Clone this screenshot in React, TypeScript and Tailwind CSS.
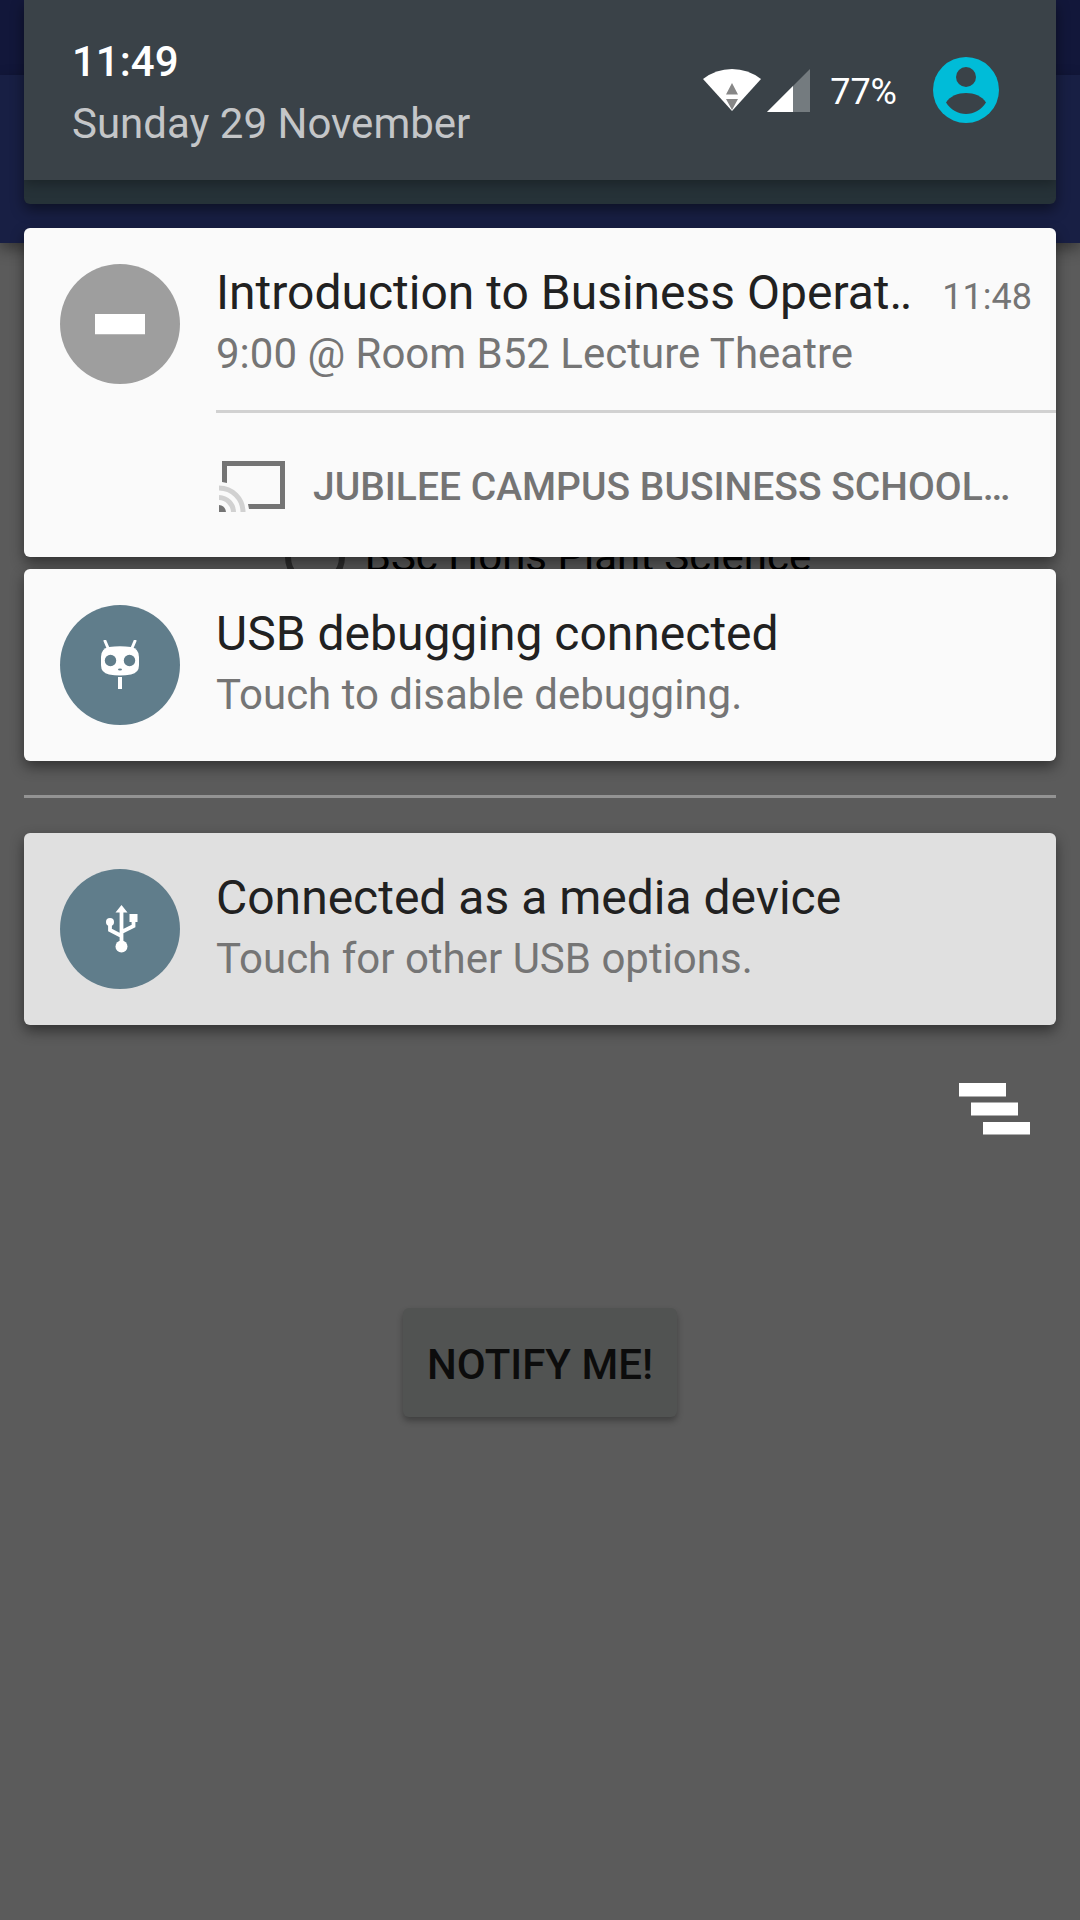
import { useState } from "react";

const cardShadow = "shadow-[0_6px_14px_rgba(0,0,0,0.45)]";

function WifiIcon() {
    return (
        <svg width="58" height="42" viewBox="0 0 58 42" aria-hidden="true">
            <path d="M29 42 0 10Q13 0 29 0T58 10Z" fill="#fff" />
            <path d="M29 14 35 25.500H23ZM23 30H35L29 41Z" fill="#878787" />
        </svg>
    );
}

function SignalIcon() {
    return (
        <svg width="43" height="43" viewBox="0 0 43 43" aria-hidden="true">
            <path d="M43 0V43H0Z" fill="#747b7f" />
            <path d="M26 17V43H0Z" fill="#fff" />
        </svg>
    );
}

function UserIcon() {
    return (
        <svg width="66" height="66" viewBox="0 0 66 66" aria-hidden="true">
            <circle cx="33" cy="33" r="33" fill="#00bcd8" />
            <circle cx="33" cy="20" r="10" fill="#3a4248" />
            <path d="M13 45.500C17 39 25 36 33 36S49 39 53 45.500C48 53 41 57 33 57S18 53 13 45.500Z" fill="#3a4248" />
        </svg>
    );
}

function CastIcon() {
    return (
        <svg width="66" height="52" viewBox="0 0 66 52" aria-hidden="true">
            <path d="M3 21V0H66V48H30L29 43H61V5H8V22Z" fill="#747474" />
            <path d="M0 44A8 8 0 0 1 7 51H0Z" fill="#747474" />
            <path d="M0 36.500A15 15 0 0 1 14.500 51M0 27A24 24 0 0 1 24 51" fill="none" stroke="#d1d1d1" strokeWidth="5" />
        </svg>
    );
}

function CidIcon() {
    return (
        <svg width="38" height="50" viewBox="0 0 38 50" aria-hidden="true">
            <path d="M4 1 7 8M34 1 31 8" stroke="#fff" strokeWidth="3" strokeLinecap="round" />
            <path d="M8 7Q19 5.500 30 7Q38 8.500 38 17V25Q38 33 30 34.500Q19 36.500 8 34.500Q0 33 0 25V17Q0 8.500 8 7Z" fill="#fff" />
            <circle cx="9.500" cy="20.500" r="5.700" fill="#607d8b" />
            <circle cx="28.500" cy="20.500" r="5.700" fill="#607d8b" />
            <ellipse cx="19" cy="29.500" rx="2" ry="1" fill="#607d8b" />
            <path d="M17 37H21V49H17Z" fill="#fff" />
        </svg>
    );
}

function UsbIcon() {
    return (
        <svg width="35" height="48" viewBox="-3 0 35 48" aria-hidden="true">
            <path d="M15.500 0 21.500 7.500H9.500ZM23.500 9H31.500V17H23.500Z" fill="#fff" />
            <circle cx="4" cy="17" r="4" fill="#fff" />
            <circle cx="15.500" cy="41.500" r="6" fill="#fff" />
            <path d="M15.500 5V40M4 17V25L15.500 31M27.500 14V21L15.500 27" fill="none" stroke="#fff" strokeWidth="3.800" />
        </svg>
    );
}

function DndIcon() {
    return (
        <svg width="50" height="21" viewBox="0 0 50 21" aria-hidden="true">
            <path d="M0 0H50V20.300H0Z" fill="#fff" />
        </svg>
    );
}

function ClearAllIcon() {
    return (
        <svg width="71" height="52" viewBox="0 0 71 52" aria-hidden="true">
            <path d="M0 0H47V13.500H0ZM12 19.500H59V32.500H12ZM24 39H71V51.500H24Z" fill="#fff" />
        </svg>
    );
}

function Notification({
    icon,
    iconColor,
    background,
    title,
    text,
    time,
    children,
}: Readonly<{
    icon: React.ReactNode;
    iconColor: string;
    background: string;
    title: string;
    text: string;
    time?: string;
    children?: React.ReactNode;
}>) {
    return (
        <li className={`${background} ${cardShadow} rounded-md flex`}>
            <div className="w-48 h-48 shrink-0 flex items-center justify-center">
                <div className={`${iconColor} w-30 h-30 rounded-full flex items-center justify-center`}>{icon}</div>
            </div>
            <div className="flex-1 min-w-0">
                <div className="pt-[35px] pr-6">
                    <div className="flex items-baseline justify-between gap-6">
                        <h2 className="text-[48px] leading-[60px] text-[#212121] whitespace-nowrap">{title}</h2>
                        {time && <time className="text-[36px] leading-[42px] text-[#757575]">{time}</time>}
                    </div>
                    <p className="text-[42px] leading-[62px] text-[#757575]">{text}</p>
                </div>
                {children}
            </div>
        </li>
    );
}

function App() {
    const [programme, setProgramme] = useState(true);

    return (
        <div className="relative min-h-screen bg-[#5b5b5b] font-[Roboto,sans-serif] overflow-hidden">
            {/* app under the shade */}
            <div className="absolute inset-0 flex flex-col items-center">
                <div className="w-full h-[75px] bg-[#12173a]" />
                <div className="w-full h-[168px] bg-[#181f44] shadow-[0_6px_14px_rgba(0,0,0,0.4)]" />
                <label className="mt-[284px] pl-4 flex items-center gap-5 text-[42px] leading-[60px] text-black">
                    <input
                        type="radio"
                        checked={!programme}
                        onChange={() => setProgramme(!programme)}
                        className="appearance-none w-[60px] h-[60px] rounded-full border-[6px] border-[#2d2d2d]"
                    />
                    BSc Hons Plant Science
                </label>
                <button className="mt-[721px] h-[109px] px-6 pt-1 rounded-md bg-[#515352] text-[42px] font-medium text-[#0c0c0c] shadow-[0_4px_6px_rgba(0,0,0,0.3)]">
                    NOTIFY ME!
                </button>
            </div>

            {/* notification shade */}
            <div className="relative px-6">
                <header className={`bg-[#263238] ${cardShadow} rounded-b-md pb-6 overflow-hidden`}>
                    <div className="h-[180px] bg-[#3a4248] shadow-[0_4px_12px_rgba(0,0,0,0.3)] px-12 flex items-center justify-between">
                        <div className="pt-1.5 text-[42px] leading-[62px]">
                            <div className="font-medium text-white">11:49</div>
                            <div className="text-[#c4c6c8]">Sunday 29 November</div>
                        </div>
                        <div className="flex items-center pr-[9px]">
                            <div className="flex gap-1.5">
                                <WifiIcon />
                                <SignalIcon />
                            </div>
                            <span className="ml-5 mr-9 pt-1 text-[36px] leading-[42px] text-white">77%</span>
                            <button aria-label="User">
                                <UserIcon />
                            </button>
                        </div>
                    </div>
                </header>

                <ul className="mt-6 flex flex-col gap-3">
                    <Notification
                        icon={<DndIcon />}
                        iconColor="bg-[#9e9e9e]"
                        background="bg-[#fafafa]"
                        title="Introduction to Business Operat‥"
                        text="9:00 @ Room B52 Lecture Theatre"
                        time="11:48"
                    >
                        <div className="mt-[25px] border-t-3 border-[#d1d1d1]">
                            <button className="h-36 flex items-center gap-7 pt-1 pl-[3px] text-[39px] font-medium text-[#747474] whitespace-nowrap">
                                <CastIcon />
                                JUBILEE CAMPUS BUSINESS SCHOOL…
                            </button>
                        </div>
                    </Notification>
                    <Notification
                        icon={<CidIcon />}
                        iconColor="bg-[#607d8b]"
                        background="bg-[#fafafa]"
                        title="USB debugging connected"
                        text="Touch to disable debugging."
                    />
                </ul>

                <hr className="mt-[34px] mb-[35px] border-t-3 border-[#939393]" />

                <ul>
                    <Notification
                        icon={<UsbIcon />}
                        iconColor="bg-[#607d8b]"
                        background="bg-[#e0e0e0]"
                        title="Connected as a media device"
                        text="Touch for other USB options."
                    />
                </ul>

                <div className="mt-[58px] pr-[26px] flex justify-end">
                    <button aria-label="Clear all notifications">
                        <ClearAllIcon />
                    </button>
                </div>
            </div>
        </div>
    );
}

export default App;
